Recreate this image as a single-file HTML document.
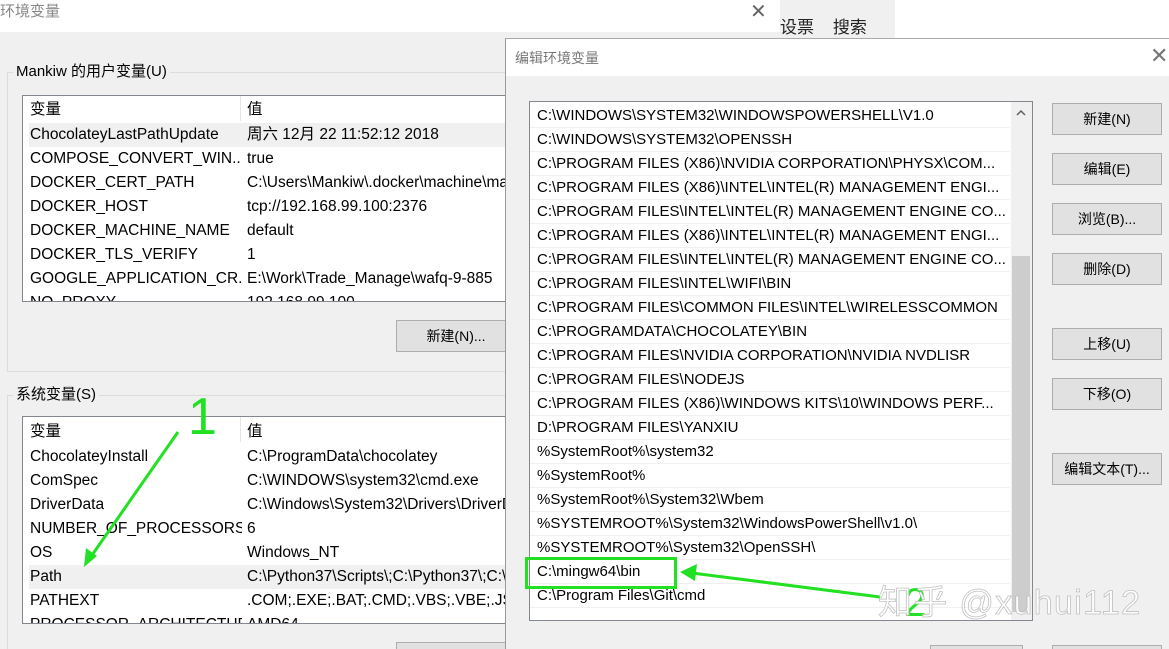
<!DOCTYPE html>
<html style="overflow:hidden;width:1169px;height:649px"><head><meta charset="utf-8"><style>
*{margin:0;padding:0;box-sizing:border-box}
body{width:1169px;height:649px;overflow:hidden;background:#f0f0f0;position:relative;font-family:"Liberation Sans","Noto Sans CJK SC",sans-serif;font-size:15px;color:#000}
.abs{position:absolute}
.t{position:absolute;white-space:nowrap;line-height:24px}
.btn{position:absolute;background:#e1e1e1;border:1px solid #adadad;text-align:center;font-size:14px;line-height:30px}
.row{position:absolute;left:0;right:0;height:24px;border-bottom:1px solid #f0f0f0}
.lt{font-size:15.5px}
.lt .k{max-width:212px;overflow:hidden}
</style></head><body>
<div class="abs" style="left:0;top:0;width:1169px;height:649px;overflow:hidden">
<div class="abs" style="left:0;top:0;width:780px;height:32px;background:#fff"></div>
<div class="t" style="left:0;top:0;color:#888;font-size:15px">环境变量</div>
<div class="t" style="left:750px;top:0;color:#666;font-size:20px">✕</div>
<div class="abs" style="left:780px;top:5px;width:115px;height:33px;background:#f0f0f0"></div>
<div class="t" style="left:780px;top:16px;font-size:17px;color:#222">设票 &nbsp; &nbsp;搜索</div>
<div class="abs" style="left:895px;top:0;width:274px;height:38px;background:#fff"></div>

<div class="abs" style="left:7px;top:72px;width:510px;height:300px;border:1px solid #dcdcdc;border-right:none"></div>
<div class="t" style="left:13px;top:60px;background:#f0f0f0;padding:0 3px">Mankiw 的用户变量(U)</div>
<div class="abs lt" style="left:22px;top:95px;width:490px;height:207px;background:#fff;border:1px solid #828790;overflow:hidden">
 <div class="abs" style="left:217px;top:0;width:1px;height:25px;background:#e5e5e5"></div>
 <div class="t" style="left:7px;top:2px">变量</div><div class="t" style="left:224px;top:2px">值</div>
 <div class="abs" style="left:6px;top:27px;width:490px;height:24px;background:#f0f0f0"></div>
 <div class="t k" style="left:7px;top:27px">ChocolateyLastPathUpdate</div><div class="t" style="left:224px;top:27px">周六 12月 22 11:52:12 2018</div>
 <div class="t k" style="left:7px;top:51px">COMPOSE_CONVERT_WIN...</div><div class="t" style="left:224px;top:51px">true</div>
 <div class="t k" style="left:7px;top:75px">DOCKER_CERT_PATH</div><div class="t" style="left:224px;top:75px">C:\Users\Mankiw\.docker\machine\machines</div>
 <div class="t k" style="left:7px;top:99px">DOCKER_HOST</div><div class="t" style="left:224px;top:99px">tcp://192.168.99.100:2376</div>
 <div class="t k" style="left:7px;top:123px">DOCKER_MACHINE_NAME</div><div class="t" style="left:224px;top:123px">default</div>
 <div class="t k" style="left:7px;top:147px">DOCKER_TLS_VERIFY</div><div class="t" style="left:224px;top:147px">1</div>
 <div class="t k" style="left:7px;top:171px">GOOGLE_APPLICATION_CR...</div><div class="t" style="left:224px;top:171px">E:\Work\Trade_Manage\wafq-9-885</div>
 <div class="t k" style="left:7px;top:195px">NO_PROXY</div><div class="t" style="left:224px;top:195px">192.168.99.100</div>
</div>
<div class="btn" style="left:396px;top:320px;width:120px;height:32px">新建(N)...</div>

<div class="abs" style="left:7px;top:395px;width:510px;height:260px;border:1px solid #dcdcdc;border-right:none"></div>
<div class="t" style="left:13px;top:383px;background:#f0f0f0;padding:0 3px">系统变量(S)</div>
<div class="abs lt" style="left:22px;top:416px;width:490px;height:208px;background:#fff;border:1px solid #828790;overflow:hidden">
 <div class="abs" style="left:217px;top:0;width:1px;height:25px;background:#e5e5e5"></div>
 <div class="t" style="left:7px;top:3px">变量</div><div class="t" style="left:224px;top:3px">值</div>
 <div class="t k" style="left:7px;top:28px">ChocolateyInstall</div><div class="t" style="left:224px;top:28px">C:\ProgramData\chocolatey</div>
 <div class="t k" style="left:7px;top:52px">ComSpec</div><div class="t" style="left:224px;top:52px">C:\WINDOWS\system32\cmd.exe</div>
 <div class="t k" style="left:7px;top:76px">DriverData</div><div class="t" style="left:224px;top:76px">C:\Windows\System32\Drivers\DriverData</div>
 <div class="t k" style="left:7px;top:100px">NUMBER_OF_PROCESSORS</div><div class="t" style="left:224px;top:100px">6</div>
 <div class="t k" style="left:7px;top:124px">OS</div><div class="t" style="left:224px;top:124px">Windows_NT</div>
 <div class="abs" style="left:6px;top:148px;width:490px;height:24px;background:#f0f0f0"></div>
 <div class="t k" style="left:7px;top:148px">Path</div><div class="t" style="left:224px;top:148px">C:\Python37\Scripts\;C:\Python37\;C:\</div>
 <div class="t k" style="left:7px;top:172px">PATHEXT</div><div class="t" style="left:224px;top:172px">.COM;.EXE;.BAT;.CMD;.VBS;.VBE;.JS;.JSE</div>
 <div class="t k" style="left:7px;top:196px">PROCESSOR_ARCHITECTURE</div><div class="t" style="left:224px;top:196px">AMD64</div>
</div>
<div class="btn" style="left:396px;top:642px;width:120px;height:32px"></div>

<div class="abs" style="left:505px;top:38px;width:664px;height:620px;background:#f0f0f0;border-left:1px solid #999;border-top:1px solid #aaa"></div>
<div class="abs" style="left:506px;top:39px;width:663px;height:37px;background:#fff"></div>
<div class="t" style="left:515px;top:46px;color:#777;font-size:14px">编辑环境变量</div>
<div class="t" style="left:1150px;top:44px;color:#777;font-size:22px">✕</div>

<div class="abs" style="left:529px;top:101px;width:504px;height:520px;background:#fff;border:1px solid #828790;overflow:hidden">
 <div class="abs" style="left:0;top:0;width:480px;font-size:15px">
 <div class="row" style="top:2px"><span class="t" style="left:7px">C:\WINDOWS\SYSTEM32\WINDOWSPOWERSHELL\V1.0</span></div>
 <div class="row" style="top:26px"><span class="t" style="left:7px">C:\WINDOWS\SYSTEM32\OPENSSH</span></div>
 <div class="row" style="top:50px"><span class="t" style="left:7px">C:\PROGRAM FILES (X86)\NVIDIA CORPORATION\PHYSX\COM...</span></div>
 <div class="row" style="top:74px"><span class="t" style="left:7px">C:\PROGRAM FILES (X86)\INTEL\INTEL(R) MANAGEMENT ENGI...</span></div>
 <div class="row" style="top:98px"><span class="t" style="left:7px">C:\PROGRAM FILES\INTEL\INTEL(R) MANAGEMENT ENGINE CO...</span></div>
 <div class="row" style="top:122px"><span class="t" style="left:7px">C:\PROGRAM FILES (X86)\INTEL\INTEL(R) MANAGEMENT ENGI...</span></div>
 <div class="row" style="top:146px"><span class="t" style="left:7px">C:\PROGRAM FILES\INTEL\INTEL(R) MANAGEMENT ENGINE CO...</span></div>
 <div class="row" style="top:170px"><span class="t" style="left:7px">C:\PROGRAM FILES\INTEL\WIFI\BIN</span></div>
 <div class="row" style="top:194px"><span class="t" style="left:7px">C:\PROGRAM FILES\COMMON FILES\INTEL\WIRELESSCOMMON</span></div>
 <div class="row" style="top:218px"><span class="t" style="left:7px">C:\PROGRAMDATA\CHOCOLATEY\BIN</span></div>
 <div class="row" style="top:242px"><span class="t" style="left:7px">C:\PROGRAM FILES\NVIDIA CORPORATION\NVIDIA NVDLISR</span></div>
 <div class="row" style="top:266px"><span class="t" style="left:7px">C:\PROGRAM FILES\NODEJS</span></div>
 <div class="row" style="top:290px"><span class="t" style="left:7px">C:\PROGRAM FILES (X86)\WINDOWS KITS\10\WINDOWS PERF...</span></div>
 <div class="row" style="top:314px"><span class="t" style="left:7px">D:\PROGRAM FILES\YANXIU</span></div>
 <div class="row" style="top:338px"><span class="t" style="left:7px">%SystemRoot%\system32</span></div>
 <div class="row" style="top:362px"><span class="t" style="left:7px">%SystemRoot%</span></div>
 <div class="row" style="top:386px"><span class="t" style="left:7px">%SystemRoot%\System32\Wbem</span></div>
 <div class="row" style="top:410px"><span class="t" style="left:7px">%SYSTEMROOT%\System32\WindowsPowerShell\v1.0\</span></div>
 <div class="row" style="top:434px"><span class="t" style="left:7px">%SYSTEMROOT%\System32\OpenSSH\</span></div>
 <div class="row" style="top:458px"><span class="t" style="left:7px">C:\mingw64\bin</span></div>
 <div class="row" style="top:482px"><span class="t" style="left:7px">C:\Program Files\Git\cmd</span></div>
 </div>
 <div class="abs" style="left:481px;top:0;width:22px;height:520px;background:#f0f0f0"></div>
 <div class="abs" style="left:482px;top:154px;width:18px;height:356px;background:#cdcdcd"></div>
 <svg class="abs" style="left:484px;top:6px" width="14" height="10"><path d="M3 7 L7 3 L11 7" fill="none" stroke="#606060" stroke-width="1.5"/></svg>
</div>

<div class="btn" style="left:1052px;top:103px;width:110px;height:32px">新建(N)</div>
<div class="btn" style="left:1052px;top:153px;width:110px;height:32px">编辑(E)</div>
<div class="btn" style="left:1052px;top:203px;width:110px;height:32px">浏览(B)...</div>
<div class="btn" style="left:1052px;top:253px;width:110px;height:32px">删除(D)</div>
<div class="btn" style="left:1052px;top:328px;width:110px;height:32px">上移(U)</div>
<div class="btn" style="left:1052px;top:378px;width:110px;height:32px">下移(O)</div>
<div class="btn" style="left:1052px;top:453px;width:110px;height:32px">编辑文本(T)...</div>
<div class="btn" style="left:930px;top:645px;width:93px;height:32px"></div>
<div class="btn" style="left:1052px;top:645px;width:110px;height:32px"></div>

<div class="abs" style="left:525px;top:557px;width:152px;height:32px;border:3px solid #22e022"></div>
<svg class="abs" style="left:0;top:0" width="1169" height="649">
 <line x1="178" y1="432" x2="90" y2="558" stroke="#22e022" stroke-width="3"/>
 <path d="M84 567 L86 548 L97 556 Z" fill="#22e022"/>
 <line x1="880" y1="597" x2="692" y2="573" stroke="#22e022" stroke-width="3"/>
 <path d="M680 572 L697 564 L695 581 Z" fill="#22e022"/>
 <text x="188" y="434" font-family="Liberation Sans" font-size="52" fill="#22e022">1</text>
 <text x="904" y="616" font-family="Liberation Sans" font-size="40" fill="#22e022">2</text>
 <text x="878" y="614" font-family="Liberation Sans,Noto Sans CJK SC,sans-serif" font-size="34" textLength="262" fill="#fff" stroke="#bbb" stroke-width="0.8" opacity="0.9">知乎 @xuhui112</text>
</svg>
</div>
</body></html>
